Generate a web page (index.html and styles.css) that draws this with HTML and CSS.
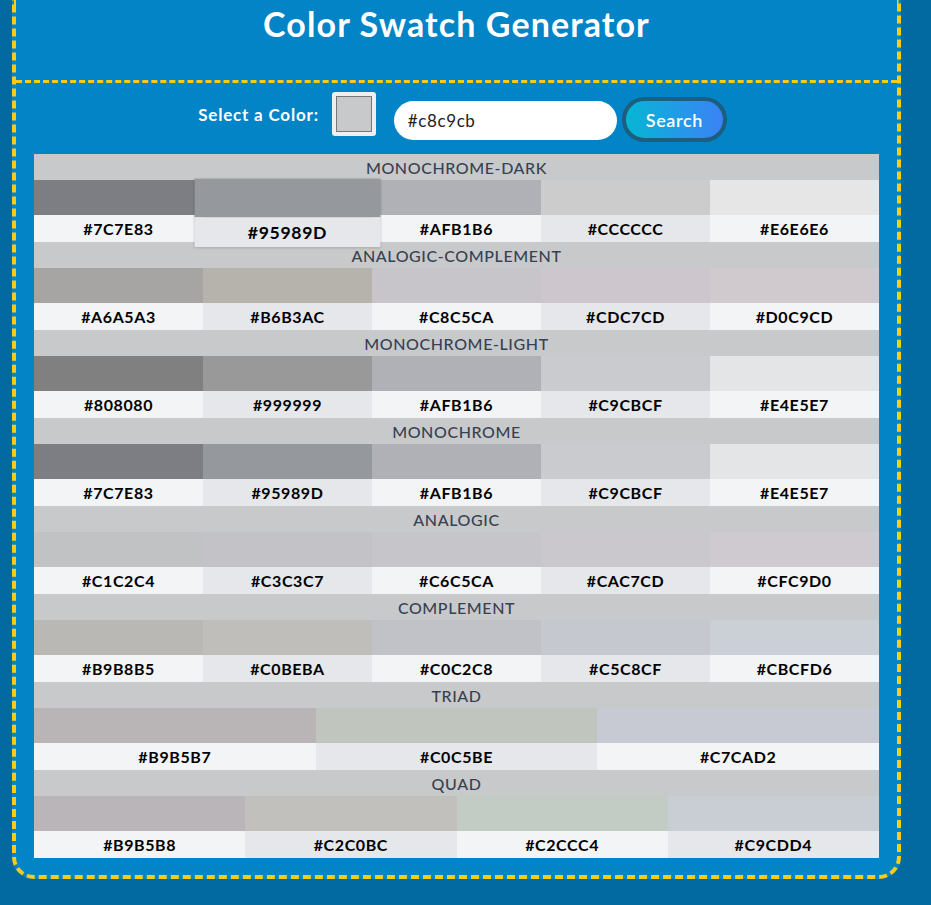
FILE: index.html
```html
<!DOCTYPE html>
<html lang="en">
<head>
<meta charset="utf-8">
<title>Color Swatch Generator</title>
<link rel="stylesheet" href="styles.css">
</head>
<body>
<div class="app">
  <header class="header">
    <h1 class="title">Color Swatch Generator</h1>
  </header>
  <main class="main">
    <div class="controls">
      <label class="picker-label">Select a Color:</label>
      <span class="picker"><span class="picker-chip"></span></span>
      <input class="hex-input" type="text" value="#c8c9cb">
      <button class="search-btn">Search</button>
    </div>
    <div class="palette">
      <section class="group">
        <div class="group-title">MONOCHROME-DARK</div>
        <div class="row">
          <div class="swatch"><div class="swatch-color" style="background:#7C7E83"></div><div class="swatch-label">#7C7E83</div></div>
          <div class="swatch is-active"><div class="swatch-color" style="background:#95989D"></div><div class="swatch-label">#95989D</div></div>
          <div class="swatch"><div class="swatch-color" style="background:#AFB1B6"></div><div class="swatch-label">#AFB1B6</div></div>
          <div class="swatch"><div class="swatch-color" style="background:#CCCCCC"></div><div class="swatch-label">#CCCCCC</div></div>
          <div class="swatch"><div class="swatch-color" style="background:#E6E6E6"></div><div class="swatch-label">#E6E6E6</div></div>
        </div>
      </section>
      <section class="group">
        <div class="group-title">ANALOGIC-COMPLEMENT</div>
        <div class="row">
          <div class="swatch"><div class="swatch-color" style="background:#A6A5A3"></div><div class="swatch-label">#A6A5A3</div></div>
          <div class="swatch"><div class="swatch-color" style="background:#B6B3AC"></div><div class="swatch-label">#B6B3AC</div></div>
          <div class="swatch"><div class="swatch-color" style="background:#C8C5CA"></div><div class="swatch-label">#C8C5CA</div></div>
          <div class="swatch"><div class="swatch-color" style="background:#CDC7CD"></div><div class="swatch-label">#CDC7CD</div></div>
          <div class="swatch"><div class="swatch-color" style="background:#D0C9CD"></div><div class="swatch-label">#D0C9CD</div></div>
        </div>
      </section>
      <section class="group">
        <div class="group-title">MONOCHROME-LIGHT</div>
        <div class="row">
          <div class="swatch"><div class="swatch-color" style="background:#808080"></div><div class="swatch-label">#808080</div></div>
          <div class="swatch"><div class="swatch-color" style="background:#999999"></div><div class="swatch-label">#999999</div></div>
          <div class="swatch"><div class="swatch-color" style="background:#AFB1B6"></div><div class="swatch-label">#AFB1B6</div></div>
          <div class="swatch"><div class="swatch-color" style="background:#C9CBCF"></div><div class="swatch-label">#C9CBCF</div></div>
          <div class="swatch"><div class="swatch-color" style="background:#E4E5E7"></div><div class="swatch-label">#E4E5E7</div></div>
        </div>
      </section>
      <section class="group">
        <div class="group-title">MONOCHROME</div>
        <div class="row">
          <div class="swatch"><div class="swatch-color" style="background:#7C7E83"></div><div class="swatch-label">#7C7E83</div></div>
          <div class="swatch"><div class="swatch-color" style="background:#95989D"></div><div class="swatch-label">#95989D</div></div>
          <div class="swatch"><div class="swatch-color" style="background:#AFB1B6"></div><div class="swatch-label">#AFB1B6</div></div>
          <div class="swatch"><div class="swatch-color" style="background:#C9CBCF"></div><div class="swatch-label">#C9CBCF</div></div>
          <div class="swatch"><div class="swatch-color" style="background:#E4E5E7"></div><div class="swatch-label">#E4E5E7</div></div>
        </div>
      </section>
      <section class="group">
        <div class="group-title">ANALOGIC</div>
        <div class="row">
          <div class="swatch"><div class="swatch-color" style="background:#C1C2C4"></div><div class="swatch-label">#C1C2C4</div></div>
          <div class="swatch"><div class="swatch-color" style="background:#C3C3C7"></div><div class="swatch-label">#C3C3C7</div></div>
          <div class="swatch"><div class="swatch-color" style="background:#C6C5CA"></div><div class="swatch-label">#C6C5CA</div></div>
          <div class="swatch"><div class="swatch-color" style="background:#CAC7CD"></div><div class="swatch-label">#CAC7CD</div></div>
          <div class="swatch"><div class="swatch-color" style="background:#CFC9D0"></div><div class="swatch-label">#CFC9D0</div></div>
        </div>
      </section>
      <section class="group">
        <div class="group-title">COMPLEMENT</div>
        <div class="row">
          <div class="swatch"><div class="swatch-color" style="background:#B9B8B5"></div><div class="swatch-label">#B9B8B5</div></div>
          <div class="swatch"><div class="swatch-color" style="background:#C0BEBA"></div><div class="swatch-label">#C0BEBA</div></div>
          <div class="swatch"><div class="swatch-color" style="background:#C0C2C8"></div><div class="swatch-label">#C0C2C8</div></div>
          <div class="swatch"><div class="swatch-color" style="background:#C5C8CF"></div><div class="swatch-label">#C5C8CF</div></div>
          <div class="swatch"><div class="swatch-color" style="background:#CBCFD6"></div><div class="swatch-label">#CBCFD6</div></div>
        </div>
      </section>
      <section class="group">
        <div class="group-title">TRIAD</div>
        <div class="row">
          <div class="swatch"><div class="swatch-color" style="background:#B9B5B7"></div><div class="swatch-label">#B9B5B7</div></div>
          <div class="swatch"><div class="swatch-color" style="background:#C0C5BE"></div><div class="swatch-label">#C0C5BE</div></div>
          <div class="swatch"><div class="swatch-color" style="background:#C7CAD2"></div><div class="swatch-label">#C7CAD2</div></div>
        </div>
      </section>
      <section class="group">
        <div class="group-title">QUAD</div>
        <div class="row">
          <div class="swatch"><div class="swatch-color" style="background:#B9B5B8"></div><div class="swatch-label">#B9B5B8</div></div>
          <div class="swatch"><div class="swatch-color" style="background:#C2C0BC"></div><div class="swatch-label">#C2C0BC</div></div>
          <div class="swatch"><div class="swatch-color" style="background:#C2CCC4"></div><div class="swatch-label">#C2CCC4</div></div>
          <div class="swatch"><div class="swatch-color" style="background:#C9CDD4"></div><div class="swatch-label">#C9CDD4</div></div>
        </div>
      </section>
    </div>
  </main>
</div>
</body>
</html>
```

FILE: styles.css
```css
* { box-sizing: border-box; }

html, body {
  margin: 0;
  padding: 0;
}

body {
  background: #0369a1;
  font-family: "Lato", "Noto Sans", sans-serif;
  color: #111;
}

.app {
  margin: 0 30px 27px 12px;
  border: 4px dashed #facc15;
  border-top: 0;
  border-radius: 0 0 22px 22px;
  background: #0284c7;
}

.header {
  height: 83px;
  border-bottom: 3px dashed #facc15;
  text-align: center;
  padding-top: 2px;
}

.title {
  margin: 0;
  color: #fff;
  font-size: 34px;
  line-height: 44px;
  font-weight: 700;
  letter-spacing: 1.1px;
}

.main {
  padding: 9px 18px 17px;
}

.controls {
  display: flex;
  justify-content: center;
  align-items: flex-start;
  height: 62px;
  padding-left: 12px;
}

.picker-label {
  color: #fff;
  font-weight: 700;
  font-size: 17px;
  letter-spacing: 0.8px;
  margin-top: 12px;
  margin-right: 13px;
}

.picker {
  display: block;
  width: 44px;
  height: 44px;
  background: #efefef;
  border-radius: 3px;
  padding: 4px;
  margin-right: 18px;
}

.picker-chip {
  display: block;
  width: 100%;
  height: 100%;
  background: #c8c9cb;
  border: 1px solid #777;
}

.hex-input {
  margin-top: 9px;
  width: 223px;
  height: 39px;
  border: 0;
  border-radius: 20px;
  background: #fff;
  padding: 0 14px;
  font-family: inherit;
  font-size: 17px;
  letter-spacing: 0.6px;
  color: #222;
  outline: none;
}

.search-btn {
  margin-top: 5px;
  margin-left: 5px;
  width: 105px;
  height: 45px;
  border: 4px solid #1b5e7e;
  border-radius: 24px;
  background: linear-gradient(to right, #06b6d4, #3b82f6);
  color: #fff;
  font-family: inherit;
  font-size: 18px;
  letter-spacing: 0.6px;
  font-weight: 600;
  cursor: pointer;
}

.palette {
  background: #c8c9cb;
}

.group-title {
  height: 26px;
  line-height: 27px;
  text-align: center;
  color: #374151;
  font-size: 16px;
  font-weight: 500;
  letter-spacing: 0.6px;
}

.row {
  display: flex;
}

.swatch {
  flex: 1 1 0;
  min-width: 0;
}

.swatch-color {
  height: 35px;
}

.swatch-label {
  height: 27px;
  line-height: 27px;
  text-align: center;
  font-weight: 700;
  font-size: 16px;
  letter-spacing: 0.6px;
  color: #000;
  background: #f3f4f6;
}

.swatch:nth-child(even) .swatch-label {
  background: #e5e7eb;
}

.swatch.is-active {
  position: relative;
  z-index: 1;
  transform: translateY(2px) scale(1.1);
  box-shadow: 0 0 0 1px rgba(0, 0, 0, 0.06), 0 1px 3px rgba(0, 0, 0, 0.12);
}
```
